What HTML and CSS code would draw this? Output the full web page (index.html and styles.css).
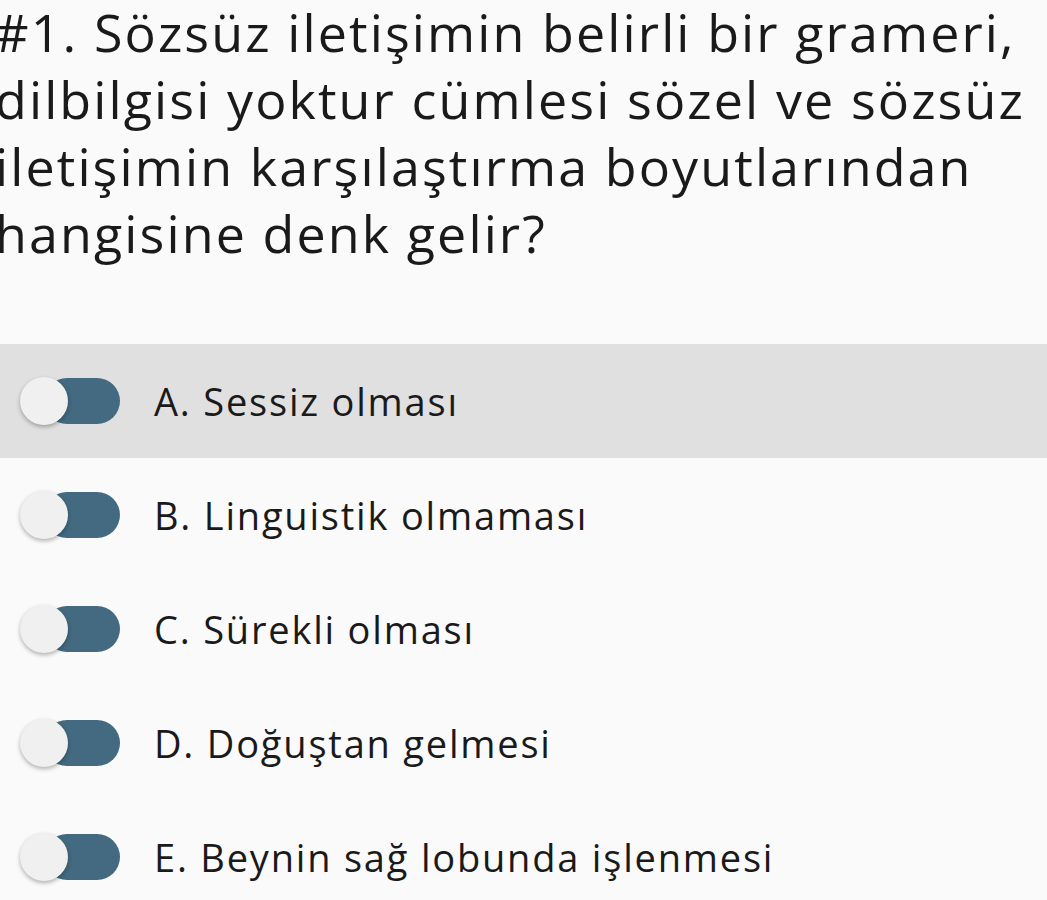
FILE: index.html
```html
<!DOCTYPE html>
<html lang="tr">
<head>
<meta charset="utf-8">
<link rel="stylesheet" href="styles.css">
</head>
<body>
<main class="quiz">
  <h1 class="question">#1. Sözsüz iletişimin belirli bir grameri, dilbilgisi yoktur cümlesi sözel ve sözsüz iletişimin karşılaştırma boyutlarından hangisine denk gelir?</h1>
  <ul class="options">
    <li class="option active"><span class="toggle"><span class="knob"></span></span><span class="label">A. Sessiz olması</span></li>
    <li class="option"><span class="toggle"><span class="knob"></span></span><span class="label">B. Linguistik olmaması</span></li>
    <li class="option"><span class="toggle"><span class="knob"></span></span><span class="label">C. Sürekli olması</span></li>
    <li class="option"><span class="toggle"><span class="knob"></span></span><span class="label">D. Doğuştan gelmesi</span></li>
    <li class="option"><span class="toggle"><span class="knob"></span></span><span class="label">E. Beynin sağ lobunda işlenmesi</span></li>
  </ul>
</main>
</body>
</html>
```

FILE: styles.css
```css
html, body {
  margin: 0;
  padding: 0;
  background: #fafafa;
}
body {
  font-family: "Open Sans", "Noto Sans", sans-serif;
  color: #1e1e1e;
  overflow: hidden;
}
.quiz {
  width: 1047px;
}
.question {
  margin: -2px -20px 0 -5px;
  font-size: 52px;
  font-weight: 400;
  line-height: 67px;
  letter-spacing: 2.1px;
  color: #1a1a1a;
}
.options {
  list-style: none;
  margin: 78px 0 0;
  padding: 0;
}
.option {
  display: flex;
  align-items: center;
  height: 114px;
  padding-left: 20px;
}
.option.active {
  background: #e0e0e0;
}
.toggle {
  position: relative;
  width: 100px;
  height: 46px;
  margin-right: 34px;
  display: flex;
  align-items: center;
}
.toggle::before {
  content: "";
  position: absolute;
  left: 24px;
  right: 0;
  top: 0;
  bottom: 0;
  background: #436a80;
  border-radius: 23px;
}
.knob {
  position: relative;
  width: 48px;
  height: 48px;
  border-radius: 50%;
  background: #f0f0f0;
  box-shadow: 0 2px 4px rgba(0,0,0,0.3);
}
.label {
  font-size: 38px;
  letter-spacing: 1.8px;
  color: #1a1a1a;
}
```
